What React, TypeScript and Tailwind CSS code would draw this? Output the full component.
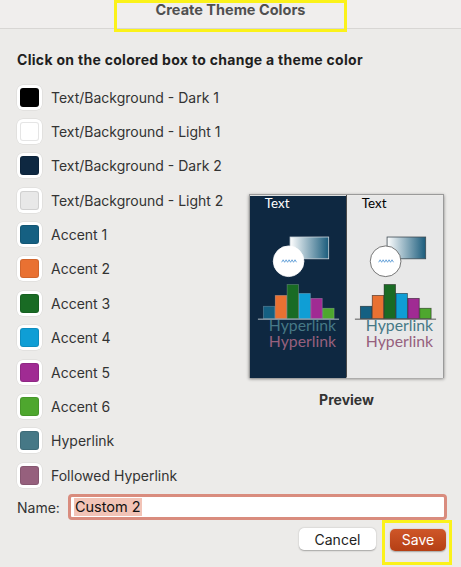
import React from 'react';

interface ThemeSlot {
  label: string;
  color: string;
}

const slots: ThemeSlot[] = [
  { label: 'Text/Background - Dark 1', color: '#000000' },
  { label: 'Text/Background - Light 1', color: '#ffffff' },
  { label: 'Text/Background - Dark 2', color: '#0e2841' },
  { label: 'Text/Background - Light 2', color: '#e8e8e8' },
  { label: 'Accent 1', color: '#156082' },
  { label: 'Accent 2', color: '#e97132' },
  { label: 'Accent 3', color: '#196b24' },
  { label: 'Accent 4', color: '#0f9ed5' },
  { label: 'Accent 5', color: '#a02b93' },
  { label: 'Accent 6', color: '#4ea72e' },
  { label: 'Hyperlink', color: '#467886' },
  { label: 'Followed Hyperlink', color: '#96607d' },
];

const bars = [
  { x: 13, top: 111, color: '#156082' },
  { x: 25, top: 100, color: '#e97132' },
  { x: 37, top: 89, color: '#196b24' },
  { x: 49, top: 98, color: '#0f9ed5' },
  { x: 61, top: 103, color: '#a02b93' },
  { x: 73, top: 113, color: '#4ea72e' },
];

// One half of the preview (dark or light background)
const PreviewPanel: React.FC<{ dark: boolean; id: string }> = ({ dark, id }) => {
  const text = dark ? '#ffffff' : '#000000';
  const outline = dark ? 'rgba(255,255,255,0.25)' : 'rgba(0,0,0,0.55)';
  return (
    <svg width="97" height="184" viewBox="0 0 97 184" className="block">
      <defs>
        <linearGradient id={id} x1="0" x2="1" y1="0" y2="0">
          <stop offset="0" stopColor="#ffffff" />
          <stop offset="1" stopColor="#1a5c7c" />
        </linearGradient>
      </defs>
      <rect width="97" height="184" fill={dark ? '#0e2841' : '#e8e8e8'} />
      <text x="15" y="12.5" fontSize="13.5" fill={text} fontFamily="Lato, 'Open Sans', sans-serif">
        Text
      </text>
      <rect x="40.5" y="41.5" width="39" height="22" fill={`url(#${id})`} stroke={dark ? '#cfd8de' : '#3d4a52'} strokeWidth="0.8" />
      <circle cx="39" cy="66" r="15.5" fill="#ffffff" stroke={dark ? '#ffffff' : '#555'} strokeWidth="0.8" />
      <polyline
        points="32,67 33.5,64.5 35,67 36.5,64.5 38,67 39.5,64.5 41,67 42.5,64.5 44,67 45.5,64.5 47,67"
        fill="none"
        stroke="#5b9bd5"
        strokeWidth="0.9"
      />
      {bars.map((b, i) => (
        <rect
          key={i}
          x={b.x + 0.5}
          y={b.top + 0.5}
          width="11.5"
          height={124 - b.top - 0.5}
          fill={b.color}
          stroke={outline}
          strokeWidth="0.8"
        />
      ))}
      <line x1="8" y1="124.5" x2="90" y2="124.5" stroke={dark ? '#b8c2ca' : '#555'} strokeWidth="1" />
      <text x="19" y="136" fontSize="14.5" textLength="68" lengthAdjust="spacingAndGlyphs" fill="#467886" fontFamily="Lato, 'Open Sans', sans-serif">
        Hyperlink
      </text>
      <text x="19" y="153" fontSize="14.5" textLength="68" lengthAdjust="spacingAndGlyphs" fill="#96607d" fontFamily="Lato, 'Open Sans', sans-serif">
        Hyperlink
      </text>
    </svg>
  );
};

export default function App() {
  return (
    <div
      className="relative w-[461px] h-[567px] overflow-hidden bg-[#ecebe9] text-[#262626]"
      style={{ fontFamily: "Inter, 'Liberation Sans', sans-serif" }}
    >
      {/* Title bar */}
      <div className="h-[29px] flex items-center justify-center bg-[#f0eeed] border-b border-[#d8d6d4]">
        <span className="text-[14.5px] font-bold text-[#505050] -mt-[8px]">Create Theme Colors</span>
      </div>
      <div className="absolute left-[114px] top-0 w-[233px] h-[32px] border-[3px] border-[#fbf21a] pointer-events-none" />

      <div className="px-[17px]">
        <div className="h-[51px] flex items-center pt-[10px]">
          <h2 className="text-[14px] font-bold text-[#1f1f1f] tracking-[0.3px]">
            Click on the colored box to change a theme color
          </h2>
        </div>

        <div className="flex">
          {/* Color slots */}
          <div className="w-[232px] flex flex-col">
            {slots.map((s) => (
              <div key={s.label} className="h-[34.36px] flex items-center gap-[9px]">
                <div className="w-[25px] h-[25px] rounded-[6px] bg-white shadow-[0_0_0_0.5px_rgba(0,0,0,0.08)] flex items-center justify-center">
                  <div
                    className="w-[19px] h-[19px] rounded-[3px] border border-black/10"
                    style={{ backgroundColor: s.color }}
                  />
                </div>
                <span className="text-[14px] text-[#333]">{s.label}</span>
              </div>
            ))}
          </div>

          {/* Preview */}
          <div className="mt-[114px] flex flex-col items-center">
            <div className="flex w-[195px] h-[184px] shadow-[0_1px_3px_rgba(0,0,0,0.45)] border border-[#9a9a9a]">
              <PreviewPanel dark id="gradDark" />
              <div className="w-px bg-[#4a4a4a]" />
              <PreviewPanel dark={false} id="gradLight" />
            </div>
            <div className="mt-[11px] text-[14px] font-bold text-[#333]">Preview</div>
          </div>
        </div>

        {/* Name */}
        <div className="flex items-center mt-[2px] gap-[8px]">
          <span className="text-[14px] text-[#333]">Name:</span>
          <div className="flex-1 h-[26px] rounded-[4px] bg-white border-[3px] border-[#d98c7e] flex items-center pl-[3px] mr-[-3px]">
            <span className="text-[14.5px] text-[#111] bg-[#f2c3b6] px-[1px] leading-[18px]">Custom 2</span>
          </div>
        </div>

        {/* Buttons */}
        <div className="flex justify-end items-center gap-[14px] mt-[7px] mr-[-2px]">
          <button className="w-[77px] h-[22px] rounded-[5px] bg-white text-[14px] text-[#222] shadow-[0_0.5px_1.5px_rgba(0,0,0,0.3)]">
            Cancel
          </button>
          <div className="relative">
            <button className="w-[56px] h-[22px] rounded-[5px] bg-gradient-to-b from-[#cf5628] to-[#b53f14] text-[14px] text-white shadow-[0_0.5px_1.5px_rgba(0,0,0,0.3)]">
              Save
            </button>
            <div className="absolute -left-[8px] -top-[7px] w-[70px] h-[45px] border-[3px] border-[#fbf21a] pointer-events-none" />
          </div>
        </div>
      </div>
    </div>
  );
}
